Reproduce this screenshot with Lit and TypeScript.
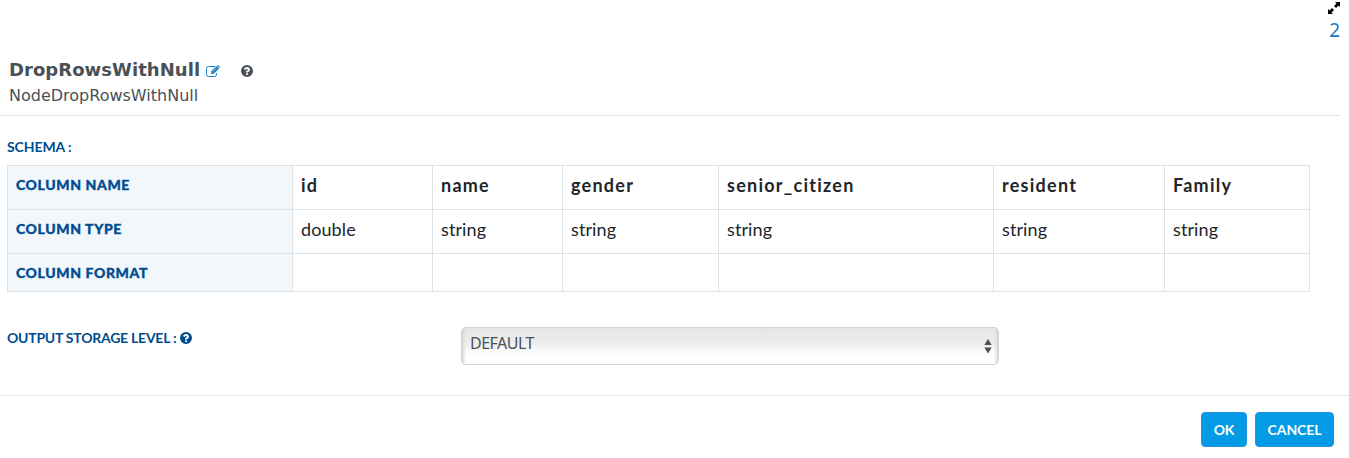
import { LitElement, html, css, svg } from "lit";
import { customElement } from "lit/decorators.js";

const columns = [
  { name: "id", type: "double", k: "id" },
  { name: "name", type: "string", k: "name" },
  { name: "gender", type: "string", k: "gender" },
  { name: "senior_citizen", type: "string", k: "senior" },
  { name: "resident", type: "string", k: "resident" },
  { name: "Family", type: "string", k: "family" },
];

const question = svg`<path fill-rule="evenodd" d="M8 0a8 8 0 1 1 0 16A8 8 0 0 1 8 0ZM6.9 11.1v2.2h2.3v-2.2ZM4 5.4l1.8 1.3C6.5 5.7 7 5.2 7.9 5.2c.7 0 1.3.4 1.3 1 0 .6-.4.8-1.1 1.2-.7.4-1.5 1-1.5 2.1v.6h2.5c0-.6.3-.8 1-1.2.9-.5 1.800-1.200 1.800-2.700C11.900 4.200 10.100 2.700 8.100 2.700 6.200 2.700 5 3.700 4 5.400Z"/>`;

@customElement("app-root")
export class AppRoot extends LitElement {
  static styles = css`
    :host { display: block; height: 458px; background: #fff; font-family: "Lato", sans-serif; overflow: hidden; }
    * { box-sizing: border-box; }
    svg { display: block; }
    .top { height: 50px; padding: 2px 9px 0 0; display: flex; flex-direction: column; align-items: flex-end; }
    .count { font: 19px/20px "Noto Sans", sans-serif; color: #1c7bc4; margin-top: 6px; }
    .head { width: 1340px; height: 66px; border-bottom: 1px solid #dee2e6; padding: 9px 0 0 9px; color: #495057; font-family: "DejaVu Sans", sans-serif; }
    .title { display: flex; height: 22px; align-items: center; font-size: 18px; font-weight: bold; line-height: 22px; }
    .name { width: 197px; letter-spacing: 0.05px; white-space: nowrap; }
    .help { margin-left: 20.5px; margin-top: 2px; }
    .sub { font-size: 16px; line-height: 20px; margin-top: 5px; letter-spacing: 0; }
    .edit { color: #1c84c6; margin-top: 1px; }
    .label { color: #004c91; font-size: 14px; font-weight: bold; line-height: 18px; white-space: nowrap; letter-spacing: -0.1px; }
    .schema { margin: 22px 0 9px 7px; }
    table { margin-left: 7px; width: 1303px; border-collapse: collapse; table-layout: fixed; color: #212529; }
    th, td { border: 1px solid #dce1e5; padding: 7px 8px 0; text-align: left; vertical-align: top; line-height: 24px; font-size: 18px; white-space: nowrap; }
    tr { height: 44px; }
    tr.last { height: 38px; }
    th { letter-spacing: 1.25px; }
    td { letter-spacing: 0.1px; }
    th.row { background: #f1f7fa; color: #004c91; font-size: 14px; font-weight: 900; letter-spacing: 0.6px; line-height: 22px; padding-top: 8px; -webkit-text-stroke: 0.35px #004c91; }
    .c0 { width: 285px; } .id { width: 140px; } .name-c { width: 130px; } .gender { width: 156px; }
    .senior { width: 275px; } .resident { width: 171px; } .family { width: 145px; }
    .storage { display: flex; height: 103px; padding: 35px 0 0 7px; }
    .storage .label { width: 454px; display: flex; padding-top: 2px; letter-spacing: -0.24px; }
    .storage .label svg { margin: 3px 0 0 4px; }
    .select { width: 538px; height: 38px; border: 1px solid #ced4da; border-radius: 5px; display: flex; justify-content: space-between; padding: 5px 6px 0 8px; color: #495057; font: 16px/20px "Noto Sans", sans-serif; letter-spacing: -0.5px;
      background: linear-gradient(90deg, #d3d8dc, transparent 4px, transparent calc(100% - 4px), #d3d8dc), linear-gradient(#e5e5e5, #ececec 40%, #f8f8f8 60%, #fff 85%); }
    .select svg { margin-top: 5px; }
    .foot { height: 63px; border-top: 1px solid #e9ebed; display: flex; justify-content: flex-end; gap: 8px; padding: 16px 15px 0 0; }
    button { height: 35px; border: 1px solid #2492dc; border-radius: 4px; background: #039be5; color: #fff; font: bold 14px/20px "Lato", sans-serif; padding: 0; letter-spacing: -0.1px; }
    .ok { width: 46px; } .cancel { width: 79px; }
  `;

  render() {
    return html`
      <div class="top">
        <svg width="12" height="12" viewBox="0 0 12 12"><path d="M7 0h5v5l-1.500-1.500L8 6 6 4l2.500-2.500ZM5 12H0V7l1.500 1.500L4 6 6 8l-2.500 2.500Z"/></svg>
        <span class="count">2</span>
      </div>
      <div class="head">
        <div class="title">
          <span class="name">DropRowsWithNull</span>
          <svg class="edit" width="14" height="12" viewBox="0 0 14 12" fill="none" stroke="currentColor">
            <path d="M9 1.500H2.500a2 2 0 0 0-2 2v6a2 2 0 0 0 2 2h6a2 2 0 0 0 2-2V8"/>
            <path fill="currentColor" stroke="none" d="M10.600.8 5 6.400V9h2.600l5.600-5.600ZM11.100.3l.5-.2c.3-.1.6 0 .8.2l1.300 1.300c.3.3.3.7 0 1l-.2.300Z"/>
            <path stroke="#fff" stroke-width=".5" d="M6.700 6.500l4-4M5.600 7.300l1.200 1.200"/>
          </svg>
          <svg class="help" width="12" height="12" viewBox="0 0 16 16" fill="#495057">${question}</svg>
        </div>
        <div class="sub">NodeDropRowsWithNull</div>
      </div>
      <div class="label schema">SCHEMA :</div>
      <table>
        <colgroup><col class="c0" />${columns.map((c) => html`<col class=${c.k === "name" ? "name-c" : c.k} />`)}</colgroup>
        <tbody>
          <tr><th class="row">COLUMN NAME</th>${columns.map((c) => html`<th>${c.name}</th>`)}</tr>
          <tr><th class="row">COLUMN TYPE</th>${columns.map((c) => html`<td>${c.type}</td>`)}</tr>
          <tr class="last"><th class="row">COLUMN FORMAT</th>${columns.map(() => html`<td></td>`)}</tr>
        </tbody>
      </table>
      <div class="storage">
        <div class="label"><span>OUTPUT STORAGE LEVEL :</span><svg width="12" height="12" viewBox="0 0 16 16" fill="#004c91">${question}</svg></div>
        <div class="select"><span>DEFAULT</span>
          <svg width="8" height="16" viewBox="0 0 8 16" fill="#495057"><path d="M4 1l3.700 6H.3ZM4 15.500L.3 9.500h7.400Z"/></svg>
        </div>
      </div>
      <div class="foot"><button class="ok">OK</button><button class="cancel">CANCEL</button></div>
    `;
  }
}
